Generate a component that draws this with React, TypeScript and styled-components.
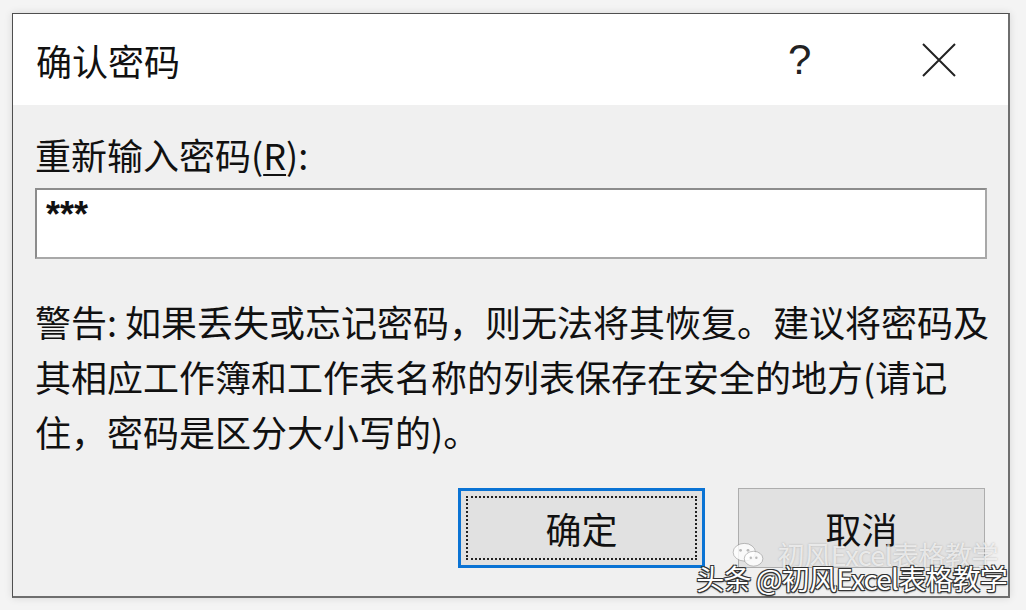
import React from "react";
import styled, { createGlobalStyle } from "styled-components";

const Global = createGlobalStyle`
  html, body { margin: 0; padding: 0; }
  body {
    background: #f4f4f4;
    font-family: "Noto Sans CJK SC", "Noto Sans", sans-serif;
    width: 1026px;
    height: 610px;
    overflow: hidden;
  }
`;

const Page = styled.div`
  padding: 13px 0 0 12px;
`;

const Window = styled.div`
  position: relative;
  box-sizing: border-box;
  width: 998px;
  height: 585px;
  border: 1px solid #4f4f4f;
  border-right: 2px solid #6e6e6e;
  border-bottom: 2px solid #6e6e6e;
  background: #f0f0f0;
  box-shadow: 0 0 8px rgba(0, 0, 0, 0.12);
  display: flex;
  flex-direction: column;
`;

const TitleBar = styled.div`
  height: 91px;
  background: #ffffff;
  display: flex;
  align-items: center;
  padding-left: 23px;
  padding-right: 52px;
`;

const Title = styled.div`
  flex: 1;
  font-size: 36px;
  color: #111;
`;

const HelpMark = styled.div`
  font-family: "Liberation Sans", sans-serif;
  font-size: 42px;
  font-weight: 300;
  color: #222;
  width: 24px;
  margin-right: 110px;
  line-height: 1;
`;

const CloseIcon = styled.svg`
  width: 34px;
  height: 34px;
  display: block;
`;

const Body = styled.div`
  flex: 1;
  display: flex;
  flex-direction: column;
  padding: 27px 21px 0 22px;
`;

const Label = styled.div`
  font-size: 36px;
  line-height: 44px;
  color: #111;
  u {
    text-decoration-thickness: 2px;
    text-underline-offset: 4px;
  }
`;

const Input = styled.div`
  margin-top: 12px;
  box-sizing: border-box;
  height: 71px;
  background: #ffffff;
  border: 2px solid #9a9a9a;
  border-color: #8c8c8c #a8a8a8 #a8a8a8 #8c8c8c;
  padding: 5px 9px;
  font-family: "Liberation Sans", sans-serif;
  font-size: 36px;
  font-weight: bold;
  line-height: 40px;
  color: #111;
`;

const Warning = styled.div`
  margin-top: 35px;
  font-size: 36px;
  line-height: 55px;
  color: #111;
`;

const Line = styled.div`
  white-space: nowrap;
`;

const ButtonRow = styled.div`
  margin-top: 29px;
  display: flex;
  justify-content: flex-end;
  gap: 33px;
  padding-right: 2px;
`;

const Button = styled.div<{ $primary?: boolean }>`
  box-sizing: border-box;
  width: 247px;
  height: 80px;
  background: #e1e1e1;
  border: ${(p) => (p.$primary ? "3px solid #0a73d4" : "1px solid #adadad")};
  display: flex;
  align-items: center;
  justify-content: center;
  font-size: 36px;
  color: #111;
  padding: ${(p) => (p.$primary ? "5px" : "7px")};
`;

const FocusRect = styled.div<{ $show?: boolean }>`
  box-sizing: border-box;
  width: 100%;
  height: 100%;
  border: 2px dotted ${(p) => (p.$show ? "#222" : "transparent")};
  display: flex;
  align-items: center;
  justify-content: center;
`;

const WatermarkFaint = styled.div`
  position: absolute;
  right: 10px;
  bottom: 26px;
  display: flex;
  align-items: center;
  gap: 14px;
  font-size: 27px;
  line-height: 30px;
  letter-spacing: -0.5px;
  color: rgba(255, 255, 255, 0.7);
  text-shadow: 0 0 2px rgba(90, 90, 90, 0.4);
  white-space: nowrap;
  pointer-events: none;
`;

const Watermark = styled.div`
  position: absolute;
  right: 1px;
  bottom: 2px;
  font-size: 28px;
  line-height: 32px;
  color: #ffffff;
  white-space: nowrap;
  letter-spacing: -0.8px;
  text-shadow: 1px 1px 0 #333, -1px -1px 0 #333, 1px -1px 0 #333,
    -1px 1px 0 #333, 0 1px 2px #000;
  pointer-events: none;
`;

const WeChat = () => (
  <svg width="32" height="26" viewBox="0 0 34 28">
    <ellipse cx="13" cy="11" rx="12" ry="9.5" fill="rgba(255,255,255,0.8)" stroke="rgba(120,120,120,0.5)" strokeWidth="1" />
    <ellipse cx="23" cy="18" rx="10" ry="8" fill="rgba(255,255,255,0.8)" stroke="rgba(120,120,120,0.5)" strokeWidth="1" />
    <circle cx="9" cy="9" r="1.5" fill="rgba(120,120,120,0.5)" />
    <circle cx="17" cy="9" r="1.5" fill="rgba(120,120,120,0.5)" />
    <circle cx="20" cy="17" r="1.3" fill="rgba(120,120,120,0.5)" />
    <circle cx="26" cy="17" r="1.3" fill="rgba(120,120,120,0.5)" />
  </svg>
);

export default function App() {
  return (
    <>
      <Global />
      <Page>
        <Window>
          <TitleBar>
            <Title>确认密码</Title>
            <HelpMark>?</HelpMark>
            <CloseIcon viewBox="0 0 34 34">
              <path d="M1 1 L33 33 M33 1 L1 33" stroke="#222" strokeWidth="2" fill="none" />
            </CloseIcon>
          </TitleBar>
          <Body>
            <Label>
              重新输入密码(<u>R</u>):
            </Label>
            <Input>***</Input>
            <Warning>
              <Line>警告: 如果丢失或忘记密码，则无法将其恢复。建议将密码及</Line>
              <Line>其相应工作簿和工作表名称的列表保存在安全的地方(请记</Line>
              <Line>住，密码是区分大小写的)。</Line>
            </Warning>
            <ButtonRow>
              <Button $primary>
                <FocusRect $show>确定</FocusRect>
              </Button>
              <Button>
                <FocusRect>取消</FocusRect>
              </Button>
            </ButtonRow>
          </Body>
          <WatermarkFaint>
            <WeChat />
            <span>初风Excel表格教学</span>
          </WatermarkFaint>
          <Watermark>头条 @初风Excel表格教学</Watermark>
        </Window>
      </Page>
    </>
  );
}
